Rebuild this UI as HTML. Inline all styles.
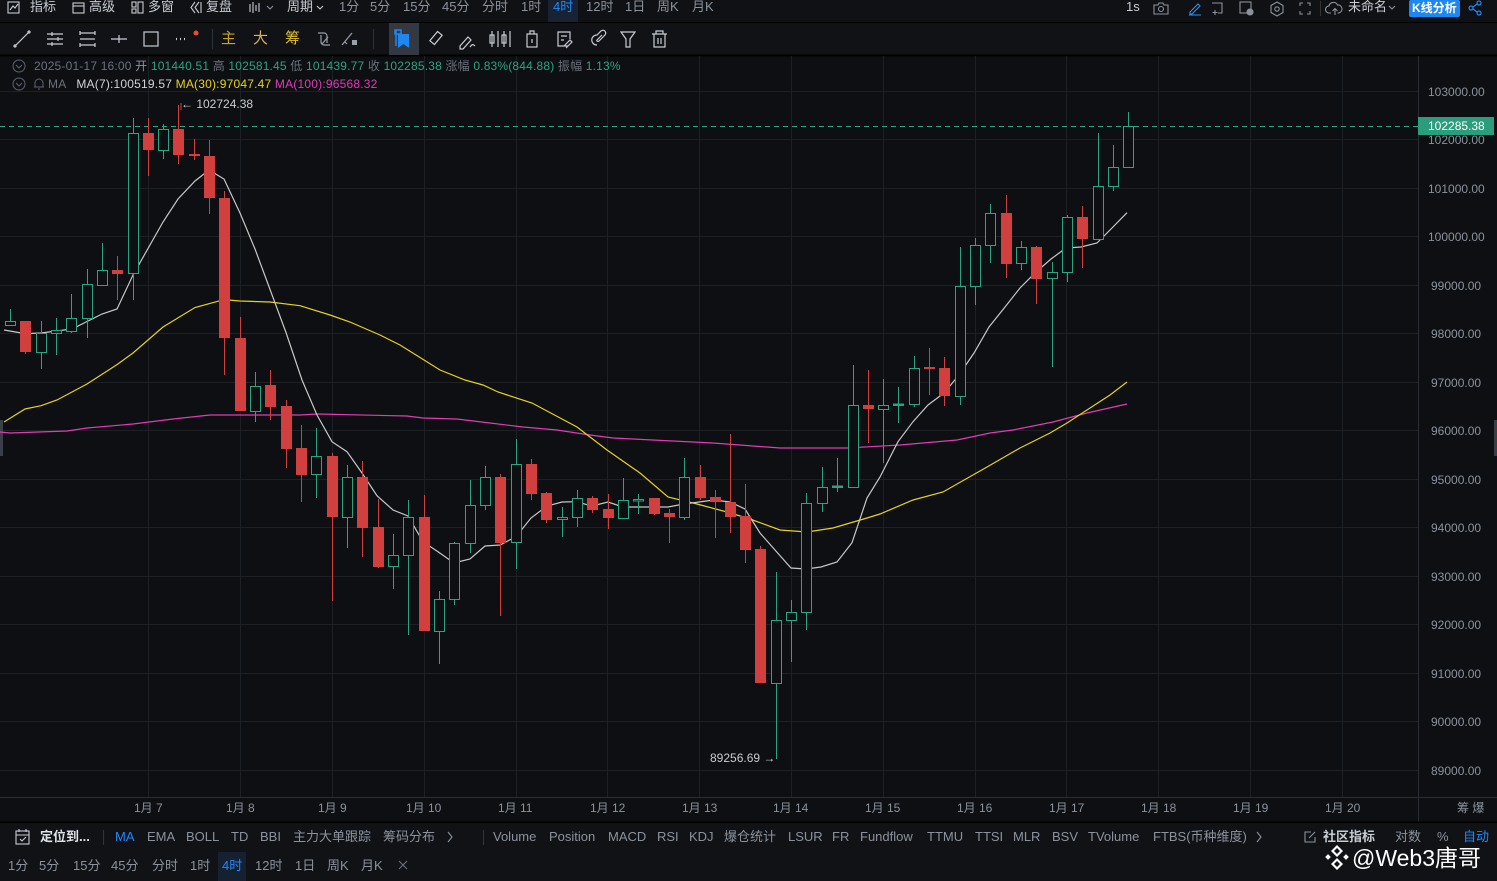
<!DOCTYPE html>
<html><head><meta charset="utf-8"><style>
*{margin:0;padding:0;box-sizing:border-box}
body{width:1497px;height:881px;background:#0d0f12;overflow:hidden;position:relative;font-family:"Liberation Sans","Noto Sans CJK SC",sans-serif;color:#8c929c}
.t{position:absolute;white-space:nowrap;font-size:13px;line-height:16px}
.s12{font-size:12px}
svg{position:absolute;left:0;top:0}
</style></head><body>
<svg width="1497" height="881">
<rect x="0" y="0" width="1497" height="22" fill="#0f1115"/>
<line x1="0" y1="22.5" x2="1497" y2="22.5" stroke="#000" />
<rect x="0" y="23" width="1497" height="32" fill="#101216"/>
<line x1="0" y1="55.5" x2="1497" y2="55.5" stroke="#000" stroke-width="2"/>
<rect x="548" y="0" width="30" height="22" fill="#172232"/>
<rect x="389" y="23" width="30" height="32" fill="#343840"/>
<g stroke="#1d2025" stroke-width="1">
<line x1="0" y1="91.5" x2="1418" y2="91.5"/><line x1="0" y1="139.5" x2="1418" y2="139.5"/><line x1="0" y1="188.5" x2="1418" y2="188.5"/><line x1="0" y1="236.5" x2="1418" y2="236.5"/><line x1="0" y1="285.5" x2="1418" y2="285.5"/><line x1="0" y1="333.5" x2="1418" y2="333.5"/><line x1="0" y1="382.5" x2="1418" y2="382.5"/><line x1="0" y1="430.5" x2="1418" y2="430.5"/><line x1="0" y1="479.5" x2="1418" y2="479.5"/><line x1="0" y1="527.5" x2="1418" y2="527.5"/><line x1="0" y1="576.5" x2="1418" y2="576.5"/><line x1="0" y1="624.5" x2="1418" y2="624.5"/><line x1="0" y1="673.5" x2="1418" y2="673.5"/><line x1="0" y1="721.5" x2="1418" y2="721.5"/><line x1="0" y1="770.5" x2="1418" y2="770.5"/>
<line x1="148.5" y1="56" x2="148.5" y2="797"/><line x1="240.5" y1="56" x2="240.5" y2="797"/><line x1="332.5" y1="56" x2="332.5" y2="797"/><line x1="424.5" y1="56" x2="424.5" y2="797"/><line x1="516.5" y1="56" x2="516.5" y2="797"/><line x1="607.5" y1="56" x2="607.5" y2="797"/><line x1="699.5" y1="56" x2="699.5" y2="797"/><line x1="791.5" y1="56" x2="791.5" y2="797"/><line x1="883.5" y1="56" x2="883.5" y2="797"/><line x1="975.5" y1="56" x2="975.5" y2="797"/><line x1="1066.5" y1="56" x2="1066.5" y2="797"/><line x1="1158.5" y1="56" x2="1158.5" y2="797"/><line x1="1250.5" y1="56" x2="1250.5" y2="797"/><line x1="1342.5" y1="56" x2="1342.5" y2="797"/>
</g>
<line x1="1418.5" y1="56" x2="1418.5" y2="822" stroke="#2a2d33"/>
<line x1="0" y1="797.5" x2="1497" y2="797.5" stroke="#2a2d33"/>
<line x1="0" y1="822.5" x2="1497" y2="822.5" stroke="#000" stroke-width="2"/>
<rect x="0" y="823" width="1497" height="58" fill="#101216"/>
<rect x="218" y="852" width="28" height="29" fill="#152130"/>
<rect x="0" y="420" width="3" height="36" fill="#3a3e47"/>
<rect x="1494" y="420" width="3" height="36" fill="#3a3e47"/>
<line x1="0" y1="126.5" x2="1418" y2="126.5" stroke="#2aa57e" stroke-dasharray="5,4"/>
<rect x="1418" y="117" width="76" height="18" fill="#2a9d7c"/>
<polyline fill="none" stroke="#e03cb4" stroke-width="1.2" points="0,432 10,433 67,431 87,428 133,424 173,419 210,415 300,415 317,414 407,416 423,418 457,419 490,423 523,427 557,430 590,435 613,438 713,443 780,448 847,448 900,445 957,440 990,433 1013,430 1053,422 1087,413 1127,404"/>
<polyline fill="none" stroke="#e6d21e" stroke-width="1.2" points="4,422 25,409 41,405.7 57,400 87,384 117,364.6 133,353 163,327 195,307.5 224,299.6 240,301 270,302 300,305.7 330,315 350,322 380,335 400,345 440,370 465,380 483,385 498,392 532,403 577,427 590,437 607,450 640,473 668,497 697,504 727,512 750,519 780,530 807,532 833,528 867,518 880,514 913,500 943,492 987,467 1020,448 1050,433 1067,423 1110,395 1127,382"/>
<polyline fill="none" stroke="#c8c8c8" stroke-width="1.2" points="4,330 25,333.6 41,333 72,329 102,314 117,309 133,275 163,222 178,199 195,181 209,170 224,179 240,213 255,249 286,332.5 302,380 317,415 332,441.7 347,451.7 362,473 377,495.7 393,510 408,516 423,541.7 438,551.7 454,563 470,559 485,546 500,545 516,536.7 531,518 547,506 562,502 576,501.7 592,506 608,502 623,507 638,507 668,507 684,504 699,502 714,500 730,502 745,509 760,533 775,550 791,568 806,569 821,567 837,562 852,542.7 867,498 880,477 898,441.7 913,421.7 928,405 944,393 959,375 974,353 989,327 1005,307 1020,288 1035,273 1051,259 1066,248 1081,247 1097,243 1112,228 1127,212.7"/>
<g stroke-width="1">
<line x1="10.5" y1="309" x2="10.5" y2="325" stroke="#2aa57e"/><rect x="5.5" y="321.5" width="10" height="4" fill="#0d0f12" stroke="#2aa57e"/>
<line x1="25.5" y1="321" x2="25.5" y2="354" stroke="#d13f3f"/><rect x="20" y="321" width="11" height="31" fill="#d13f3f"/>
<line x1="41.5" y1="321" x2="41.5" y2="369" stroke="#2aa57e"/><rect x="36.5" y="333.5" width="10" height="19" fill="#0d0f12" stroke="#2aa57e"/>
<line x1="56.5" y1="318" x2="56.5" y2="355" stroke="#2aa57e"/><rect x="51.5" y="330.5" width="10" height="3" fill="#0d0f12" stroke="#2aa57e"/>
<line x1="71.5" y1="294" x2="71.5" y2="333" stroke="#2aa57e"/><rect x="66.5" y="318.5" width="10" height="13" fill="#0d0f12" stroke="#2aa57e"/>
<line x1="87.5" y1="269" x2="87.5" y2="338" stroke="#2aa57e"/><rect x="82.5" y="284.5" width="10" height="34" fill="#0d0f12" stroke="#2aa57e"/>
<line x1="102.5" y1="243" x2="102.5" y2="285" stroke="#2aa57e"/><rect x="97.5" y="270.5" width="10" height="15" fill="#0d0f12" stroke="#2aa57e"/>
<line x1="117.5" y1="256" x2="117.5" y2="300" stroke="#d13f3f"/><rect x="112" y="270" width="11" height="4" fill="#d13f3f"/>
<line x1="133.5" y1="118" x2="133.5" y2="300" stroke="#2aa57e"/><rect x="128.5" y="133.5" width="10" height="140" fill="#0d0f12" stroke="#2aa57e"/>
<line x1="148.5" y1="118" x2="148.5" y2="176" stroke="#d13f3f"/><rect x="143" y="133" width="11" height="17" fill="#d13f3f"/>
<line x1="163.5" y1="124" x2="163.5" y2="159" stroke="#2aa57e"/><rect x="158.5" y="129.5" width="10" height="21" fill="#0d0f12" stroke="#2aa57e"/>
<line x1="178.5" y1="105" x2="178.5" y2="164" stroke="#d13f3f"/><rect x="173" y="129" width="11" height="26" fill="#d13f3f"/>
<line x1="194.5" y1="139" x2="194.5" y2="160" stroke="#d13f3f"/><rect x="189" y="154" width="11" height="2" fill="#d13f3f"/>
<line x1="209.5" y1="140" x2="209.5" y2="214" stroke="#d13f3f"/><rect x="204" y="156" width="11" height="42" fill="#d13f3f"/>
<line x1="224.5" y1="191" x2="224.5" y2="375" stroke="#d13f3f"/><rect x="219" y="198" width="11" height="140" fill="#d13f3f"/>
<line x1="240.5" y1="317" x2="240.5" y2="411" stroke="#d13f3f"/><rect x="235" y="338" width="11" height="73" fill="#d13f3f"/>
<line x1="255.5" y1="372" x2="255.5" y2="422" stroke="#2aa57e"/><rect x="250.5" y="386.5" width="10" height="25" fill="#0d0f12" stroke="#2aa57e"/>
<line x1="270.5" y1="370" x2="270.5" y2="420" stroke="#d13f3f"/><rect x="265" y="385" width="11" height="22" fill="#d13f3f"/>
<line x1="286.5" y1="400" x2="286.5" y2="468" stroke="#d13f3f"/><rect x="281" y="406" width="11" height="43" fill="#d13f3f"/>
<line x1="301.5" y1="425" x2="301.5" y2="502" stroke="#d13f3f"/><rect x="296" y="448" width="11" height="27" fill="#d13f3f"/>
<line x1="316.5" y1="428" x2="316.5" y2="498" stroke="#2aa57e"/><rect x="311.5" y="456.5" width="10" height="18" fill="#0d0f12" stroke="#2aa57e"/>
<line x1="332.5" y1="453" x2="332.5" y2="601" stroke="#d13f3f"/><rect x="327" y="456" width="11" height="61" fill="#d13f3f"/>
<line x1="347.5" y1="465" x2="347.5" y2="548" stroke="#2aa57e"/><rect x="342.5" y="477.5" width="10" height="40" fill="#0d0f12" stroke="#2aa57e"/>
<line x1="362.5" y1="461" x2="362.5" y2="557" stroke="#d13f3f"/><rect x="357" y="477" width="11" height="51" fill="#d13f3f"/>
<line x1="378.5" y1="499" x2="378.5" y2="568" stroke="#d13f3f"/><rect x="373" y="527" width="11" height="40" fill="#d13f3f"/>
<line x1="393.5" y1="534" x2="393.5" y2="589" stroke="#2aa57e"/><rect x="388.5" y="555.5" width="10" height="11" fill="#0d0f12" stroke="#2aa57e"/>
<line x1="408.5" y1="500" x2="408.5" y2="635" stroke="#2aa57e"/><rect x="403.5" y="517.5" width="10" height="38" fill="#0d0f12" stroke="#2aa57e"/>
<line x1="424.5" y1="495" x2="424.5" y2="631" stroke="#d13f3f"/><rect x="419" y="517" width="11" height="114" fill="#d13f3f"/>
<line x1="439.5" y1="591" x2="439.5" y2="664" stroke="#2aa57e"/><rect x="434.5" y="599.5" width="10" height="32" fill="#0d0f12" stroke="#2aa57e"/>
<line x1="454.5" y1="542" x2="454.5" y2="605" stroke="#2aa57e"/><rect x="449.5" y="543.5" width="10" height="56" fill="#0d0f12" stroke="#2aa57e"/>
<line x1="470.5" y1="480" x2="470.5" y2="553" stroke="#2aa57e"/><rect x="465.5" y="505.5" width="10" height="38" fill="#0d0f12" stroke="#2aa57e"/>
<line x1="485.5" y1="466" x2="485.5" y2="510" stroke="#2aa57e"/><rect x="480.5" y="477.5" width="10" height="28" fill="#0d0f12" stroke="#2aa57e"/>
<line x1="500.5" y1="474" x2="500.5" y2="616" stroke="#d13f3f"/><rect x="495" y="477" width="11" height="66" fill="#d13f3f"/>
<line x1="516.5" y1="439" x2="516.5" y2="569" stroke="#2aa57e"/><rect x="511.5" y="464.5" width="10" height="78" fill="#0d0f12" stroke="#2aa57e"/>
<line x1="531.5" y1="459" x2="531.5" y2="500" stroke="#d13f3f"/><rect x="526" y="464" width="11" height="30" fill="#d13f3f"/>
<line x1="546.5" y1="492" x2="546.5" y2="523" stroke="#d13f3f"/><rect x="541" y="493" width="11" height="27" fill="#d13f3f"/>
<line x1="562.5" y1="507" x2="562.5" y2="537" stroke="#2aa57e"/><rect x="557.5" y="517.5" width="10" height="2" fill="#0d0f12" stroke="#2aa57e"/>
<line x1="577.5" y1="490" x2="577.5" y2="527" stroke="#2aa57e"/><rect x="572.5" y="498.5" width="10" height="19" fill="#0d0f12" stroke="#2aa57e"/>
<line x1="592.5" y1="496" x2="592.5" y2="513" stroke="#d13f3f"/><rect x="587" y="498" width="11" height="12" fill="#d13f3f"/>
<line x1="608.5" y1="494" x2="608.5" y2="529" stroke="#d13f3f"/><rect x="603" y="509" width="11" height="9" fill="#d13f3f"/>
<line x1="623.5" y1="478" x2="623.5" y2="519" stroke="#2aa57e"/><rect x="618.5" y="500.5" width="10" height="18" fill="#0d0f12" stroke="#2aa57e"/>
<line x1="638.5" y1="494" x2="638.5" y2="514" stroke="#2aa57e"/><rect x="633.5" y="499.5" width="10" height="1.5" fill="#0d0f12" stroke="#2aa57e"/>
<line x1="654.5" y1="498" x2="654.5" y2="515" stroke="#d13f3f"/><rect x="649" y="498" width="11" height="16" fill="#d13f3f"/>
<line x1="669.5" y1="509" x2="669.5" y2="543" stroke="#d13f3f"/><rect x="664" y="513" width="11" height="4" fill="#d13f3f"/>
<line x1="684.5" y1="458" x2="684.5" y2="520" stroke="#2aa57e"/><rect x="679.5" y="477.5" width="10" height="40" fill="#0d0f12" stroke="#2aa57e"/>
<line x1="700.5" y1="465" x2="700.5" y2="500" stroke="#d13f3f"/><rect x="695" y="477" width="11" height="21" fill="#d13f3f"/>
<line x1="715.5" y1="490" x2="715.5" y2="538" stroke="#d13f3f"/><rect x="710" y="497" width="11" height="5" fill="#d13f3f"/>
<line x1="730.5" y1="434" x2="730.5" y2="533" stroke="#d13f3f"/><rect x="725" y="502" width="11" height="15" fill="#d13f3f"/>
<line x1="745.5" y1="484" x2="745.5" y2="563" stroke="#d13f3f"/><rect x="740" y="516" width="11" height="34" fill="#d13f3f"/>
<line x1="760.5" y1="546" x2="760.5" y2="683" stroke="#d13f3f"/><rect x="755" y="549" width="11" height="134" fill="#d13f3f"/>
<line x1="776.5" y1="572" x2="776.5" y2="759" stroke="#2aa57e"/><rect x="771.5" y="620.5" width="10" height="63" fill="#0d0f12" stroke="#2aa57e"/>
<line x1="791.5" y1="600" x2="791.5" y2="662" stroke="#2aa57e"/><rect x="786.5" y="612.5" width="10" height="8" fill="#0d0f12" stroke="#2aa57e"/>
<line x1="806.5" y1="493" x2="806.5" y2="630" stroke="#2aa57e"/><rect x="801.5" y="503.5" width="10" height="109" fill="#0d0f12" stroke="#2aa57e"/>
<line x1="822.5" y1="467" x2="822.5" y2="512" stroke="#2aa57e"/><rect x="817.5" y="487.5" width="10" height="16" fill="#0d0f12" stroke="#2aa57e"/>
<line x1="837.5" y1="458" x2="837.5" y2="492" stroke="#2aa57e"/><rect x="832.5" y="486" width="10" height="1.5" fill="#2aa57e" stroke="#2aa57e"/>
<line x1="853.5" y1="365" x2="853.5" y2="487" stroke="#2aa57e"/><rect x="848.5" y="405.5" width="10" height="82" fill="#0d0f12" stroke="#2aa57e"/>
<line x1="868.5" y1="370" x2="868.5" y2="443" stroke="#d13f3f"/><rect x="863" y="405" width="11" height="4" fill="#d13f3f"/>
<line x1="883.5" y1="379" x2="883.5" y2="463" stroke="#2aa57e"/><rect x="878.5" y="405.5" width="10" height="4" fill="#0d0f12" stroke="#2aa57e"/>
<line x1="898.5" y1="387" x2="898.5" y2="423" stroke="#2aa57e"/><rect x="893.5" y="404" width="10" height="1.5" fill="#2aa57e" stroke="#2aa57e"/>
<line x1="914.5" y1="356" x2="914.5" y2="407" stroke="#2aa57e"/><rect x="909.5" y="368.5" width="10" height="36" fill="#0d0f12" stroke="#2aa57e"/>
<line x1="929.5" y1="348" x2="929.5" y2="395" stroke="#d13f3f"/><rect x="924" y="367" width="11" height="2" fill="#d13f3f"/>
<line x1="944.5" y1="357" x2="944.5" y2="406" stroke="#d13f3f"/><rect x="939" y="368" width="11" height="28" fill="#d13f3f"/>
<line x1="960.5" y1="247" x2="960.5" y2="405" stroke="#2aa57e"/><rect x="955.5" y="286.5" width="10" height="110" fill="#0d0f12" stroke="#2aa57e"/>
<line x1="975.5" y1="238" x2="975.5" y2="305" stroke="#2aa57e"/><rect x="970.5" y="245.5" width="10" height="41" fill="#0d0f12" stroke="#2aa57e"/>
<line x1="990.5" y1="204" x2="990.5" y2="263" stroke="#2aa57e"/><rect x="985.5" y="213.5" width="10" height="32" fill="#0d0f12" stroke="#2aa57e"/>
<line x1="1006.5" y1="195" x2="1006.5" y2="278" stroke="#d13f3f"/><rect x="1001" y="213" width="11" height="51" fill="#d13f3f"/>
<line x1="1021.5" y1="241" x2="1021.5" y2="270" stroke="#2aa57e"/><rect x="1016.5" y="247.5" width="10" height="16" fill="#0d0f12" stroke="#2aa57e"/>
<line x1="1036.5" y1="246" x2="1036.5" y2="304" stroke="#d13f3f"/><rect x="1031" y="247" width="11" height="32" fill="#d13f3f"/>
<line x1="1052.5" y1="262" x2="1052.5" y2="367" stroke="#2aa57e"/><rect x="1047.5" y="272.5" width="10" height="6" fill="#0d0f12" stroke="#2aa57e"/>
<line x1="1067.5" y1="215" x2="1067.5" y2="282" stroke="#2aa57e"/><rect x="1062.5" y="217.5" width="10" height="55" fill="#0d0f12" stroke="#2aa57e"/>
<line x1="1082.5" y1="206" x2="1082.5" y2="268" stroke="#d13f3f"/><rect x="1077" y="217" width="11" height="22" fill="#d13f3f"/>
<line x1="1098.5" y1="133" x2="1098.5" y2="240" stroke="#2aa57e"/><rect x="1093.5" y="186.5" width="10" height="53" fill="#0d0f12" stroke="#2aa57e"/>
<line x1="1113.5" y1="145" x2="1113.5" y2="191" stroke="#2aa57e"/><rect x="1108.5" y="167.5" width="10" height="19" fill="#0d0f12" stroke="#2aa57e"/>
<line x1="1128.5" y1="112" x2="1128.5" y2="167" stroke="#2aa57e"/><rect x="1123.5" y="126.5" width="10" height="41" fill="#0d0f12" stroke="#2aa57e"/>
</g>
<g fill="none" stroke="#5c6270" stroke-width="1">
<circle cx="19" cy="66" r="6"/><polyline points="16,65 19,68 22,65"/>
<circle cx="19" cy="84" r="6"/><polyline points="16,83 19,86 22,83"/>
<path d="M35 87 v-4 a4 4 0 0 1 8 0 v4 h1 h-10 M38 89 h2"/>
</g>
<g fill="none" stroke="#c8ccd2" stroke-width="1.1">
<rect x="8" y="2" width="11" height="11"/><polyline points="10,10 13,6 15,8 18,4"/>
<rect x="73" y="3" width="11" height="10"/><line x1="73" y1="6" x2="84" y2="6"/>
<rect x="132" y="2" width="4" height="5"/><rect x="132" y="9" width="4" height="4"/><rect x="138" y="2" width="5" height="11"/>
<polyline points="195,2 191,7.5 195,13"/><polyline points="199,2 195,7.5 199,13"/><line x1="201" y1="2" x2="201" y2="13"/>
<path d="M250 4v8M253 2v11M256 5v6M259 3v9"/><polyline points="267,6 270,9 273,6" stroke="#8c929c"/>
<polyline points="317,6 320,9 323,6"/>
</g>
<g fill="none" stroke="#8c929c" stroke-width="1.1">
<path d="M1154 5h4l1-2h4l1 2h4v9h-14z"/><circle cx="1161" cy="9" r="2.5"/>
<path d="M1190 12l8-8 2 2-8 8h-2z M1189 15h12" stroke="#2f8ff0"/>
<path d="M1212 3h10v10h-4M1215 10v5M1212.5 12.5h5"/>
<rect x="1240" y="2" width="11" height="11"/><circle cx="1250" cy="12" r="3" fill="#8c929c"/>
<path d="M1277 2l6 3.5v7l-6 3.5-6-3.5v-7z"/><circle cx="1277" cy="9" r="2.2"/>
<path d="M1300 6v-3h3M1307 3h3v3M1310 11v3h-3M1303 14h-3v-3"/>
<line x1="1320.5" y1="1" x2="1320.5" y2="16" stroke="#333"/>
<path d="M1331 13h-2a3.5 3.5 0 0 1 0-7a4.5 4.5 0 0 1 8.5-1a3.5 3.5 0 0 1 1 8h-1M1335 15v-6M1332.5 11l2.5-2.5 2.5 2.5"/>
<polyline points="1389,6 1392,9 1395,6"/>
</g>
<rect x="1409" y="0" width="51" height="17" rx="2" fill="#1e88f0"/>
<g fill="none" stroke="#1e88f0" stroke-width="1.2"><circle cx="1479" cy="3" r="2"/><circle cx="1479" cy="13" r="2"/><circle cx="1471" cy="8" r="2"/><path d="M1473 7l4-3M1473 9l4 3"/></g>
<g fill="none" stroke="#c8ccd2" stroke-width="1.2">
<path d="M15 46L29 32"/><circle cx="15" cy="46" r="1" /><circle cx="29" cy="32" r="1"/>
<path d="M47 34h16M47 39h16M47 44h16M52 32v4M58 37v4M52 42v4"/>
<path d="M80 33h15M80 39h15M80 45h15M80 31v4M80 43v4M95 31v4M95 43v4"/>
<path d="M111 39h16M119 35v8"/>
<rect x="144" y="32" width="14" height="14"/>
<path d="M176 39h1M180 39h1M184 39h1" stroke-width="2.2"/>
<path d="M318 33h6a3 3 0 0 1 3 3v7M330 45h-6a3 3 0 0 1-3-3v-7M322 44l6-7" stroke="#9aa0aa"/>
<path d="M342 45l10-12M345 42l2 2" stroke="#9aa0aa"/><rect x="352" y="40" width="5" height="5" fill="#9aa0aa" stroke="none"/>
<line x1="373.5" y1="29" x2="373.5" y2="49" stroke="#2a2e35"/>
<line x1="212.5" y1="29" x2="212.5" y2="49" stroke="#2a2e35"/>
<rect x="430" y="35" width="12" height="6" transform="rotate(-50 436 38)"/>
<path d="M460 46l8-9 3 3-8 9h-3zM470 47c2-3 3-3 5-1"/>
<path d="M492 31v16M498 31v16M504 31v16M510 31v16"/><rect x="490" y="35" width="4" height="8"/><rect x="502" y="35" width="4" height="8"/>
<rect x="527" y="34" width="10" height="13"/><path d="M530 34v-3h4v3M532 39v4"/>
<path d="M568 46h-10v-14h12v7M561 36h6M561 40h3M564 46l6-6 2 2-6 6"/>
<path d="M597 45c-7 0-7-10 0-10l4-4c3-2 6 1 4 4l-6 6c-1 1-3 0-2-1l5-5"/>
<path d="M621 32h14l-5 7v8h-4v-8z"/>
<path d="M652 34h15M656 34v-3h7v3M654 34v13h11v-13M658 38v6M661 38v6"/>
</g>
<circle cx="196" cy="33" r="2.5" fill="#f04a2e"/>
<path d="M395 30h6v4h-6z" fill="none" stroke="#1e88f0" stroke-width="1.5"/>
<path d="M398 34h11v14l-5.5-4-5.5 4z" fill="#1e88f0"/>
<path d="M396 30v16" stroke="#1e88f0" stroke-width="1.5"/>
<g fill="none" stroke="#c8ccd2" stroke-width="1.1">
<rect x="16" y="831" width="13" height="13"/><path d="M16 835h13M19 829v3M26 829v3M20 839l2 2 4-4"/>
<line x1="103.5" y1="830" x2="103.5" y2="845" stroke="#333"/>
<line x1="483.5" y1="830" x2="483.5" y2="845" stroke="#333"/>
<polyline points="448,832 452,837 448,842" stroke="#8c929c"/>
<polyline points="1257,832 1261,837 1257,842" stroke="#8c929c"/>
<path d="M1311 832h-6v10h10v-5M1309 838l6-6" stroke="#8c929c"/>
<path d="M399 861l8 8M407 861l-8 8" stroke="#6b717b"/>
</g>
<g fill="#fff"><path d="M1337 845l6 6-6 6-6-6z M1337 848l3 3-3 3-3-3z" fill-rule="evenodd"/><rect x="1326" y="855" width="4" height="4" transform="rotate(45 1328 857)"/><rect x="1344" y="855" width="4" height="4" transform="rotate(45 1346 857)"/><path d="M1337 858l6 6-6 6-6-6z M1337 861l3 3-3 3-3-3z" fill-rule="evenodd"/></g>
<line x1="181" y1="103" x2="181" y2="110" stroke="#d13f3f"/>
</svg>

<div class="t" style="left:30px;top:-1px;color:#c8ccd2">指标</div>
<div class="t" style="left:89px;top:-1px;color:#c8ccd2">高级</div>
<div class="t" style="left:148px;top:-1px;color:#c8ccd2">多窗</div>
<div class="t" style="left:206px;top:-1px;color:#c8ccd2">复盘</div>
<div class="t" style="left:287px;top:-1px;color:#c8ccd2">周期</div>
<div class="t" style="left:339px;top:-1px">1分</div>
<div class="t" style="left:370px;top:-1px">5分</div>
<div class="t" style="left:403px;top:-1px">15分</div>
<div class="t" style="left:442px;top:-1px">45分</div>
<div class="t" style="left:482px;top:-1px">分时</div>
<div class="t" style="left:521px;top:-1px">1时</div>
<div class="t" style="left:553px;top:-1px;color:#1e88ff">4时</div>
<div class="t" style="left:586px;top:-1px">12时</div>
<div class="t" style="left:625px;top:-1px">1日</div>
<div class="t" style="left:657px;top:-1px">周K</div>
<div class="t" style="left:692px;top:-1px">月K</div>
<div class="t" style="left:1126px;top:-1px;color:#c8ccd2">1s</div>
<div class="t" style="left:1348px;top:-1px;color:#c8ccd2">未命名</div>
<div class="t" style="left:1412px;top:0px;color:#fff;font-weight:bold;font-size:12px">K线分析</div>
<div class="t" style="left:221px;top:31px;font-size:15px;color:#c9a227">主</div>
<div class="t" style="left:253px;top:31px;font-size:15px;color:#d9b24a">大</div>
<div class="t" style="left:285px;top:31px;font-size:15px;color:#e0c030">筹</div>
<div class="t s12" style="left:34px;top:58px;color:#6b717b;letter-spacing:0.18px">2025-01-17 16:00 <span style="color:#8c929c">开</span> <span style="color:#2aa57e">101440.51</span> 高 <span style="color:#2aa57e">102581.45</span> 低 <span style="color:#2aa57e">101439.77</span> 收 <span style="color:#2aa57e">102285.38</span> 涨幅 <span style="color:#2aa57e">0.83%(844.88)</span> 振幅 <span style="color:#2aa57e">1.13%</span></div>
<div class="t s12" style="left:48px;top:76px;color:#6b717b;letter-spacing:0.2px">MA &nbsp;&nbsp;<span style="color:#d0d3d8">MA(7):100519.57</span> <span style="color:#e6d21e">MA(30):97047.47</span> <span style="color:#e03cb4">MA(100):96568.32</span></div>
<div class="t s12" style="left:181px;top:96px;color:#c8ccd2">← 102724.38</div>
<div class="t s12" style="left:710px;top:750px;color:#c8ccd2">89256.69 →</div>
<div class="t s12" style="left:1428px;top:84px">103000.00</div>
<div class="t s12" style="left:1428px;top:132px">102000.00</div>
<div class="t s12" style="left:1428px;top:181px">101000.00</div>
<div class="t s12" style="left:1428px;top:229px">100000.00</div>
<div class="t s12" style="left:1431px;top:278px">99000.00</div>
<div class="t s12" style="left:1431px;top:326px">98000.00</div>
<div class="t s12" style="left:1431px;top:375px">97000.00</div>
<div class="t s12" style="left:1431px;top:423px">96000.00</div>
<div class="t s12" style="left:1431px;top:472px">95000.00</div>
<div class="t s12" style="left:1431px;top:520px">94000.00</div>
<div class="t s12" style="left:1431px;top:569px">93000.00</div>
<div class="t s12" style="left:1431px;top:617px">92000.00</div>
<div class="t s12" style="left:1431px;top:666px">91000.00</div>
<div class="t s12" style="left:1431px;top:714px">90000.00</div>
<div class="t s12" style="left:1431px;top:763px">89000.00</div>
<div class="t s12" style="left:1428px;top:118px;color:#fff">102285.38</div>
<div class="t s12" style="left:134px;top:800px">1月 7</div>
<div class="t s12" style="left:226px;top:800px">1月 8</div>
<div class="t s12" style="left:318px;top:800px">1月 9</div>
<div class="t s12" style="left:406px;top:800px">1月 10</div>
<div class="t s12" style="left:498px;top:800px">1月 11</div>
<div class="t s12" style="left:590px;top:800px">1月 12</div>
<div class="t s12" style="left:682px;top:800px">1月 13</div>
<div class="t s12" style="left:773px;top:800px">1月 14</div>
<div class="t s12" style="left:865px;top:800px">1月 15</div>
<div class="t s12" style="left:957px;top:800px">1月 16</div>
<div class="t s12" style="left:1049px;top:800px">1月 17</div>
<div class="t s12" style="left:1141px;top:800px">1月 18</div>
<div class="t s12" style="left:1233px;top:800px">1月 19</div>
<div class="t s12" style="left:1325px;top:800px">1月 20</div>
<div class="t s12" style="left:1457px;top:800px">筹 爆</div>
<div class="t" style="left:40px;top:829px;color:#e0e3e8;font-weight:bold">定位到...</div>
<div class="t" style="left:115px;top:829px;color:#1e88ff">MA</div>
<div class="t" style="left:147px;top:829px">EMA</div>
<div class="t" style="left:186px;top:829px">BOLL</div>
<div class="t" style="left:231px;top:829px">TD</div>
<div class="t" style="left:260px;top:829px">BBI</div>
<div class="t" style="left:293px;top:829px">主力大单跟踪</div>
<div class="t" style="left:383px;top:829px">筹码分布</div>
<div class="t" style="left:493px;top:829px">Volume</div>
<div class="t" style="left:549px;top:829px">Position</div>
<div class="t" style="left:608px;top:829px">MACD</div>
<div class="t" style="left:657px;top:829px">RSI</div>
<div class="t" style="left:689px;top:829px">KDJ</div>
<div class="t" style="left:724px;top:829px">爆仓统计</div>
<div class="t" style="left:788px;top:829px">LSUR</div>
<div class="t" style="left:832px;top:829px">FR</div>
<div class="t" style="left:860px;top:829px">Fundflow</div>
<div class="t" style="left:927px;top:829px">TTMU</div>
<div class="t" style="left:975px;top:829px">TTSI</div>
<div class="t" style="left:1013px;top:829px">MLR</div>
<div class="t" style="left:1052px;top:829px">BSV</div>
<div class="t" style="left:1088px;top:829px">TVolume</div>
<div class="t" style="left:1153px;top:829px">FTBS(币种维度)</div>
<div class="t" style="left:1323px;top:829px;color:#c8ccd2;font-weight:bold">社区指标</div>
<div class="t" style="left:1395px;top:829px">对数</div>
<div class="t" style="left:1437px;top:829px">%</div>
<div class="t" style="left:1463px;top:829px;color:#1e88ff">自动</div>
<div class="t" style="left:8px;top:858px">1分</div>
<div class="t" style="left:39px;top:858px">5分</div>
<div class="t" style="left:73px;top:858px">15分</div>
<div class="t" style="left:111px;top:858px">45分</div>
<div class="t" style="left:152px;top:858px">分时</div>
<div class="t" style="left:190px;top:858px">1时</div>
<div class="t" style="left:222px;top:858px;color:#1e88ff">4时</div>
<div class="t" style="left:255px;top:858px">12时</div>
<div class="t" style="left:295px;top:858px">1日</div>
<div class="t" style="left:327px;top:858px">周K</div>
<div class="t" style="left:361px;top:858px">月K</div>
<div class="t" style="left:1352px;top:844px;color:#fff;font-size:23px;line-height:28px">@Web3唐哥</div>
</body></html>
